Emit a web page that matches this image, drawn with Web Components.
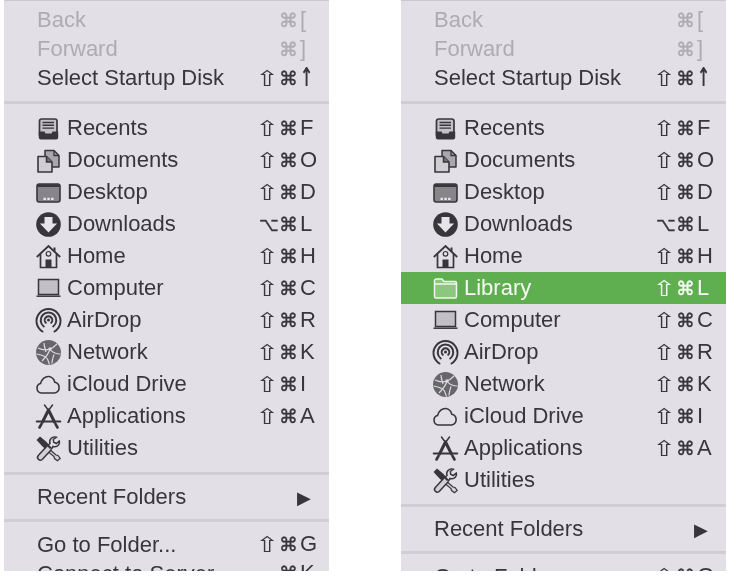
<!DOCTYPE html>
<html>
<head>
<meta charset="utf-8">
<title>Go menu</title>
<style>
  html, body { margin: 0; background: #fff; }
  body { width: 730px; height: 576px; overflow: hidden; }
</style>
</head>
<body>
<go-page></go-page>
<script>
const ICONS = {
  recents: `<rect x="3.500" y="3" width="17.500" height="18" rx="2.200" fill="#c4c2c6" stroke="currentColor" stroke-width="1.700"/>
    <path d="M6.500 6.500h11.500M6.500 9.300h11.500M6.500 12.100h11.500" stroke="currentColor" stroke-width="1.400"/>
    <path d="M2.800 15.500h5.700l1 2h6l1-2h5.700v6a2 2 0 0 1-2 2H4.800a2 2 0 0 1-2-2z" fill="currentColor"/>`,
  documents: `<path d="M9 8V2.500h9l5 5V19h-7" fill="#a9a7ab" stroke="currentColor" stroke-width="1.500" stroke-linejoin="round"/>
    <path d="M18 2.500v5h5" fill="none" stroke="currentColor" stroke-width="1.300"/>
    <path d="M2 8.500h8.500l5.500 5.500v10H2z" fill="#d0ced2" stroke="currentColor" stroke-width="1.600" stroke-linejoin="round"/>
    <path d="M10.500 8.500V14H16" fill="#77757a" stroke="currentColor" stroke-width="1.500"/>`,
  desktop: `<rect x="1" y="4" width="23" height="18" rx="2.200" fill="#878589" stroke="currentColor" stroke-width="1.600"/>
    <path d="M1.500 6.200a2 2 0 0 1 2-2h18a2 2 0 0 1 2 2V7h-22z" fill="currentColor"/>
    <path d="M7.500 18.800h2.400M11.300 18.800h2.400M15.100 18.800h2.400" stroke="#eceaef" stroke-width="2.200"/>`,
  downloads: `<circle cx="12.500" cy="12.500" r="12.300" fill="currentColor"/>
    <path d="M8.500 5h8v6.500h4.600L12.500 20.500 3.900 11.500h4.600z" fill="#e7e5ea"/>`,
  home: `<path d="M.8 13 12.500 2 24.200 13" fill="none" stroke="currentColor" stroke-width="1.800"/>
    <path d="M4.500 10v13.500h16V10" fill="#e2e0e6" stroke="currentColor" stroke-width="1.700"/>
    <path d="M9.500 23.500v-8h6v8z" fill="currentColor"/>
    <circle cx="12.500" cy="9.800" r="2.300" fill="none" stroke="currentColor" stroke-width="1.200"/>
    <path d="M18.500 3.500v4" stroke="currentColor" stroke-width="2"/>`,
  computer: `<rect x="2.500" y="3.500" width="20" height="15" fill="#c2c0c4" stroke="currentColor" stroke-width="1.500"/>
    <path d="M0.500 20.200h24" stroke="currentColor" stroke-width="1.500"/>`,
  airdrop: `<g fill="none" stroke="currentColor" stroke-width="2" stroke-linecap="round">
      <path d="M6.500 23.500a12 12 0 1 1 12 0"/>
      <path d="M7.800 18.500a7.800 7.800 0 1 1 9.400 0"/>
      <path d="M9.800 14.800a3.800 3.800 0 1 1 5.400 0"/>
    </g>
    <circle cx="12.500" cy="12" r="1.500" fill="currentColor"/>`,
  network: `<circle cx="12.500" cy="12.500" r="12.500" fill="currentColor" opacity=".72"/>
    <g fill="none" stroke="#dcdade" stroke-width="1.200">
      <path d="M2 8c4 2 8 2.500 12 1 3-1 5-3 7-5"/>
      <path d="M14 9c-1 4-4 8-8 12M14 9c2 3 6 5 10.500 5M.5 14c4 1 8 1 11 5l2 5.500"/>
      <path d="M18 14.500c-1 3-2 6-2 9"/>
      <path d="M8 3c0 3 1 5 2 9"/>
    </g>
    <circle cx="14" cy="9" r="1.700" fill="#dcdade"/>`,
  cloud: `<path d="M5.500 21a4.800 4.800 0 0 1-1-9.400C5.500 7 9.500 4 13 4.500c3 .4 5 2.800 5.800 5.700A5.500 5.500 0 0 1 18.500 21z" fill="none" stroke="currentColor" stroke-width="1.600" stroke-linejoin="round"/>`,
  apps: `<g fill="none" stroke="currentColor" stroke-linecap="round">
      <path d="M12.500 6 6.500 18M12.500 6 18.500 18" stroke-width="3"/>
      <path d="M8.500 1 12.500 6.500 16.500 1" stroke-width="1.500"/>
      <path d="M.8 17.500h23.400" stroke-width="2.200"/>
      <path d="M5.500 20 3.500 23.500M19.500 20 21.500 23.500" stroke-width="2.600"/>
    </g>`,
  utilities: `<path d="M12 12 20 19l2 .5 2.200 3-2.700 2.300-3-2.200-.5-2L10 14z" fill="#d2d0d4" stroke="currentColor" stroke-width="1.200"/>
    <path d="M.5 4 4 .5 10 5.500 15.500 11.500 12 15.500 6 10z" fill="currentColor"/>
    <path d="M11 10 2.300 19.500a2.800 2.800 0 0 0 3.900 4L15 14" fill="#d2d0d4" stroke="currentColor" stroke-width="1.500"/>
    <path d="M15 13.500l2-3a5 5 0 0 0 5.500-1.500c1-1.300 1.200-3 .8-4l-3 2.500-2.600-1.200-.4-2.800 3-2.200c-1.800-.6-4-.1-5.300 1.300a5 5 0 0 0-1 5L11 10" fill="none" stroke="currentColor" stroke-width="1.500"/>`,
  folder: `<path d="M1.500 6V4.500A1.500 1.500 0 0 1 3 3h6l2 2.500h11A1.500 1.500 0 0 1 23.500 7v13.500A1.500 1.500 0 0 1 22 22H3a1.500 1.500 0 0 1-1.500-1.500z" fill="#8cc67f" stroke="#f1f7ee" stroke-width="1.500"/>
    <path d="M1.500 8h22" stroke="#f1f7ee" stroke-width="1.500"/>`
};

class MenuIcon extends HTMLElement {
  connectedCallback() {
    this.attachShadow({ mode: "open" });
    this.shadowRoot.innerHTML = `
      <style>
        :host { display: block; width: 25px; height: 25px; }
        svg { display: block; width: 25px; height: 25px; overflow: visible; }
      </style>
      <svg viewBox="0 0 25 25">${ICONS[this.getAttribute("name")]}</svg>`;
  }
}
customElements.define("menu-icon", MenuIcon);

class MenuRow extends HTMLElement {
  connectedCallback() {
    this.attachShadow({ mode: "open" });
    const keys = (this.getAttribute("keys") ?? "").split(" ");
    const mod = keys.length === 3 ? keys : ["", keys[0] ?? "", keys[1] ?? ""];
    const modClass = mod[0] === "⇧" ? "shift" : "opt";
    const lastClass = mod[2] === "↑" ? "up" : "l";
    this.shadowRoot.innerHTML = `
      <style>
        :host {
          display: grid;
          grid-template-columns: 1fr 20px 21px 29px;
          align-items: center;
          height: 29px;
          padding-left: 33px;
          color: #38363a;
          font: 22px "Liberation Sans", Arial, sans-serif;
          white-space: nowrap;
        }
        :host([icon]) { height: 32px; padding-left: 32px; }
        :host([disabled]) { color: #aeacb1; }
        :host([selected]) { background: #5fae50; color: #f6faf4; }
        .label { display: flex; align-items: center; gap: 6px; }
        .k { font: 19px "DejaVu Sans", sans-serif; -webkit-text-stroke: .35px currentColor; padding-bottom: 1px; }
        .shift { display: inline-block; width: 17px; text-align: center; transform: scale(1.5, 1.12); -webkit-text-stroke: 0; }
        .opt { display: inline-block; width: 17px; transform: scaleX(.9); transform-origin: left center; }
        .l { padding-bottom: 1px; }
        .up { display: inline-block; font: bold 20px "DejaVu Sans", sans-serif; padding-bottom: 2px; transform: scale(.8, 1.3); transform-origin: left center; }
        .arrow { grid-column: 4; margin-left: -3px; font: 18px "DejaVu Sans", sans-serif; }
      </style>
      <span class="label"><slot name="icon"></slot><span><slot></slot></span></span>
      ${this.hasAttribute("submenu")
        ? `<span></span><span></span><span class="arrow">▶</span>`
        : `<span class="k ${modClass}">${mod[0]}</span><span class="k">${mod[1]}</span><span class="${lastClass}">${mod[2]}</span>`}`;
  }
}
customElements.define("menu-row", MenuRow);

class MenuSep extends HTMLElement {
  connectedCallback() {
    this.attachShadow({ mode: "open" });
    this.shadowRoot.innerHTML = `
      <style>
        :host { display: flex; align-items: center; height: 18.5px; }
        :host([first]) { height: 19.5px; }
        div { flex: 1; height: 3px; background: #d0ced3; }
      </style>
      <div></div>`;
  }
}
customElements.define("menu-sep", MenuSep);

class GoMenu extends HTMLElement {
  connectedCallback() {
    this.attachShadow({ mode: "open" });
    const iconRow = (icon, label, keys, extra = "") =>
      `<menu-row icon keys="${keys}" ${extra}><menu-icon slot="icon" name="${icon}"></menu-icon>${label}</menu-row>`;
    const library = this.hasAttribute("library")
      ? iconRow("folder", "Library", "⇧ ⌘ L", "selected") : "";
    this.shadowRoot.innerHTML = `
      <style>
        :host {
          display: block;
          width: 325px;
          height: 571px;
          box-sizing: border-box;
          padding-top: 4.5px;
          border-top: 1px solid #cbc9ce;
          background: #e2e0e6;
          overflow: hidden;
          filter: blur(.55px);
        }
      </style>
      <menu-row disabled keys="⌘ [">Back</menu-row>
      <menu-row disabled keys="⌘ ]">Forward</menu-row>
      <menu-row keys="⇧ ⌘ ↑">Select Startup Disk</menu-row>
      <menu-sep first></menu-sep>
      ${iconRow("recents", "Recents", "⇧ ⌘ F")}
      ${iconRow("documents", "Documents", "⇧ ⌘ O")}
      ${iconRow("desktop", "Desktop", "⇧ ⌘ D")}
      ${iconRow("downloads", "Downloads", "⌥ ⌘ L")}
      ${iconRow("home", "Home", "⇧ ⌘ H")}
      ${library}
      ${iconRow("computer", "Computer", "⇧ ⌘ C")}
      ${iconRow("airdrop", "AirDrop", "⇧ ⌘ R")}
      ${iconRow("network", "Network", "⇧ ⌘ K")}
      ${iconRow("cloud", "iCloud Drive", "⇧ ⌘ I")}
      ${iconRow("apps", "Applications", "⇧ ⌘ A")}
      ${iconRow("utilities", "Utilities", "")}
      <menu-sep></menu-sep>
      <menu-row submenu>Recent Folders</menu-row>
      <menu-sep></menu-sep>
      <menu-row keys="⇧ ⌘ G">Go to Folder...</menu-row>
      <menu-row keys="⌘ K">Connect to Server...</menu-row>`;
  }
}
customElements.define("go-menu", GoMenu);

class GoPage extends HTMLElement {
  connectedCallback() {
    this.attachShadow({ mode: "open" });
    this.shadowRoot.innerHTML = `
      <style>
        :host { display: flex; gap: 72px; padding-left: 4px; }
      </style>
      <go-menu></go-menu>
      <go-menu library></go-menu>`;
  }
}
customElements.define("go-page", GoPage);
</script>
</body>
</html>
